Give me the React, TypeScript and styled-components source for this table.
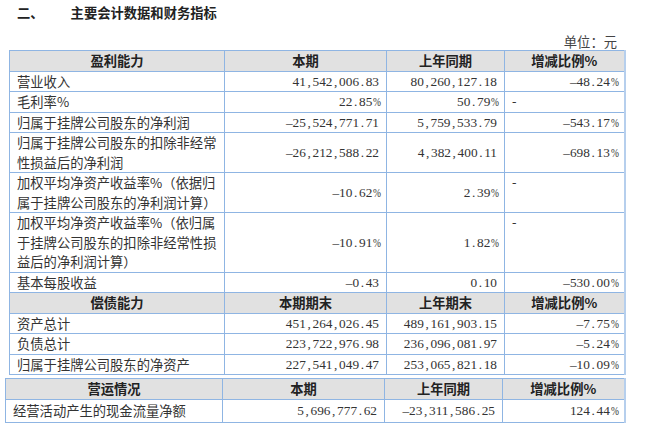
import React from "react";
import styled, { createGlobalStyle } from "styled-components";

const Global = createGlobalStyle`
  html, body { margin: 0; padding: 0; background: #ffffff; }
  body { font-family: "Liberation Serif", "Noto Sans CJK SC", serif; color: #2e2e2e; }
`;

const Page = styled.div`
  width: 648px;
  height: 427px;
  overflow: hidden;
  background: #fff;
`;

const Title = styled.div`
  display: flex;
  gap: 27px;
  padding: 4px 0 0 17px;
  line-height: 17px;
  font-family: "Noto Sans CJK SC", sans-serif;
  font-weight: 700;
  font-size: 13.3px;
  color: #222;
`;

const Unit = styled.div`
  width: 624px;
  box-sizing: border-box;
  margin-top: 12px;
  padding-right: 7px;
  text-align: right;
  line-height: 17px;
  font-family: "Noto Sans CJK SC", sans-serif;
  font-size: 13.3px;
  color: #444;
`;

const Table = styled.table<{ $left: number; $top: number; $width: number }>`
  margin-left: ${(p) => p.$left}px;
  margin-top: ${(p) => p.$top}px;
  width: ${(p) => p.$width}px;
  table-layout: fixed;
  border-collapse: collapse;
  border-right: 2px solid #b6cfed;
  font-size: 13.3px;
`;

const Col = styled.col<{ $w: number }>`
  width: ${(p) => p.$w}px;
`;

const HeadCell = styled.th`
  background: #e1e1e1;
  border: 1px solid #8fb5e3;
  padding: 0 7px;
  line-height: 19.5px;
  font-family: "Noto Sans CJK SC", sans-serif;
  font-weight: 700;
  color: #222;
  text-align: center;
  white-space: nowrap;
`;

const LabelCell = styled.td<{ $tall?: boolean }>`
  border: 1px solid #8fb5e3;
  padding: 0 7px;
  height: ${(p) => (p.$tall ? "22px" : "auto")};
  line-height: 19.5px;
  font-family: "Noto Sans CJK SC", sans-serif;
  font-weight: 400;
  color: #333;
  text-align: left;
  vertical-align: middle;
  white-space: nowrap;
`;

const NumCell = styled.td`
  border: 1px solid #8fb5e3;
  padding: 0 7px;
  line-height: 19.5px;
  text-align: right;
  vertical-align: middle;
  white-space: nowrap;
  color: #333;
`;

const ChangeCell = styled.td<{ $top?: boolean; $left?: boolean }>`
  border: 1px solid #8fb5e3;
  padding: 0 7px;
  line-height: 19.5px;
  text-align: ${(p) => (p.$left ? "left" : "right")};
  vertical-align: ${(p) => (p.$top ? "top" : "middle")};
  white-space: nowrap;
  color: #333;
`;

const Glyph = styled.span<{ $squeeze?: boolean }>`
  display: inline-block;
  width: 0.5em;
  text-align: center;
  transform: ${(p) => (p.$squeeze ? "scaleX(0.72)" : "none")};
`;

function Num({ value }: { value: string }) {
  return (
    <>
      {value.split("").map((c, i) =>
        /[0-9]/.test(c) ? (
          <React.Fragment key={i}>{c}</React.Fragment>
        ) : (
          <Glyph key={i} $squeeze={c === "%"}>
            {c === "-" ? "–" : c}
          </Glyph>
        )
      )}
    </>
  );
}

type Row = {
  label: string[];
  cur: string;
  prev: string;
  change: string;
  dashTop?: boolean;
};

const profit: Row[] = [
  { label: ["营业收入"], cur: "41,542,006.83", prev: "80,260,127.18", change: "-48.24%" },
  { label: ["毛利率%"], cur: "22.85%", prev: "50.79%", change: "-" },
  { label: ["归属于挂牌公司股东的净利润"], cur: "-25,524,771.71", prev: "5,759,533.79", change: "-543.17%" },
  {
    label: ["归属于挂牌公司股东的扣除非经常", "性损益后的净利润"],
    cur: "-26,212,588.22",
    prev: "4,382,400.11",
    change: "-698.13%",
  },
  {
    label: ["加权平均净资产收益率%（依据归", "属于挂牌公司股东的净利润计算）"],
    cur: "-10.62%",
    prev: "2.39%",
    change: "-",
    dashTop: true,
  },
  {
    label: ["加权平均净资产收益率%（依归属", "于挂牌公司股东的扣除非经常性损", "益后的净利润计算）"],
    cur: "-10.91%",
    prev: "1.82%",
    change: "-",
    dashTop: true,
  },
  { label: ["基本每股收益"], cur: "-0.43", prev: "0.10", change: "-530.00%" },
];

const debt: Row[] = [
  { label: ["资产总计"], cur: "451,264,026.45", prev: "489,161,903.15", change: "-7.75%" },
  { label: ["负债总计"], cur: "223,722,976.98", prev: "236,096,081.97", change: "-5.24%" },
  { label: ["归属于挂牌公司股东的净资产"], cur: "227,541,049.47", prev: "253,065,821.18", change: "-10.09%" },
];

const ops: Row[] = [
  { label: ["经营活动产生的现金流量净额"], cur: "5,696,777.62", prev: "-23,311,586.25", change: "124.44%" },
];

function DataRow({ row, tall }: { row: Row; tall?: boolean }) {
  const isDash = row.change === "-";
  return (
    <tr>
      <LabelCell $tall={tall}>
        {row.label.map((l, i) => (
          <React.Fragment key={i}>
            {i > 0 && <br />}
            {l}
          </React.Fragment>
        ))}
      </LabelCell>
      <NumCell>
        <Num value={row.cur} />
      </NumCell>
      <NumCell>
        <Num value={row.prev} />
      </NumCell>
      <ChangeCell $left={isDash} $top={row.dashTop}>
        {isDash ? "-" : <Num value={row.change} />}
      </ChangeCell>
    </tr>
  );
}

function HeadRow({ cells }: { cells: string[] }) {
  return (
    <tr>
      {cells.map((c) => (
        <HeadCell key={c}>{c}</HeadCell>
      ))}
    </tr>
  );
}

function Widths({ widths }: { widths: number[] }) {
  return (
    <colgroup>
      {widths.map((w, i) => (
        <Col key={i} $w={w} />
      ))}
    </colgroup>
  );
}

export default function App() {
  return (
    <Page>
      <Global />
      <Title>
        <span>二、</span>
        <span>主要会计数据和财务指标</span>
      </Title>
      <Unit>单位：元</Unit>
      <Table $left={9} $top={0} $width={615}>
        <Widths widths={[215, 162, 118, 120]} />
        <tbody>
          <HeadRow cells={["盈利能力", "本期", "上年同期", "增减比例%"]} />
          {profit.map((r) => (
            <DataRow key={r.label.join("")} row={r} />
          ))}
          <HeadRow cells={["偿债能力", "本期期末", "上年期末", "增减比例%"]} />
          {debt.map((r) => (
            <DataRow key={r.label.join("")} row={r} />
          ))}
        </tbody>
      </Table>
      <Table $left={5} $top={3} $width={619}>
        <Widths widths={[217, 162, 118, 122]} />
        <tbody>
          <HeadRow cells={["营运情况", "本期", "上年同期", "增减比例%"]} />
          {ops.map((r) => (
            <DataRow key={r.label.join("")} row={r} tall />
          ))}
        </tbody>
      </Table>
    </Page>
  );
}
